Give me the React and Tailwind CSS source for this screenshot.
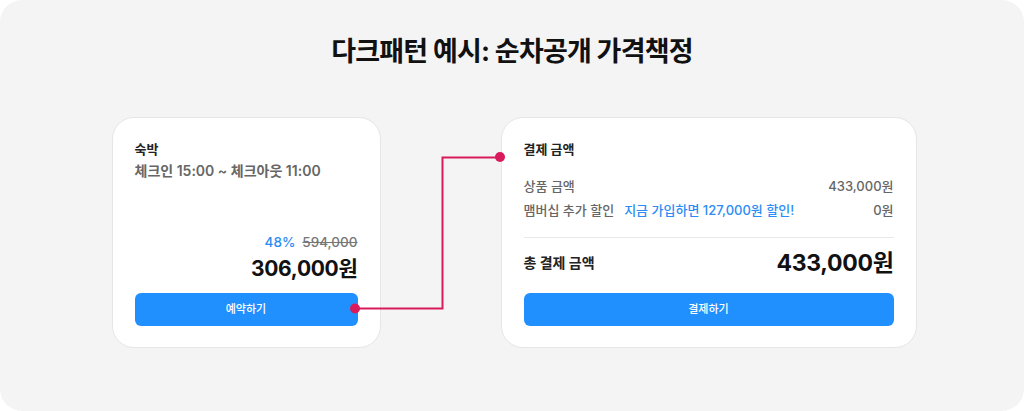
export default function App() {
  return (
    <div className="bg-white w-[1024px] h-[411px] font-['Inter','Noto_Sans_CJK_KR',sans-serif]">
      <div className="relative w-full h-full bg-[#f4f4f4] rounded-[22px] flex flex-col items-center">
        <h1 className="mt-[34px] text-[27px] leading-[36px] font-bold text-[#111] tracking-[-0.8px]">
          다크패턴 예시: 순차공개 가격책정
        </h1>

        <div className="mt-[47px] flex gap-[120px] pl-[4px]">
          {/* 숙박 카드 */}
          <div className="w-[269px] h-[231px] bg-white rounded-[22px] border border-[#e6e6e6] flex flex-col px-[22px] pt-[22px] pb-[21px]">
            <p className="text-[13px] leading-[18px] font-bold text-[#222]">숙박</p>
            <p className="mt-[3px] text-[14px] leading-[20px] font-semibold text-[#666]">
              체크인 15:00 ~ 체크아웃 11:00
            </p>
            <div className="mt-auto flex flex-col items-end">
              <div className="flex items-center gap-[7px] text-[13.5px] leading-[20px] font-medium">
                <span className="text-[#2b8cf5]">48%</span>
                <span className="text-[#777] line-through">594,000</span>
              </div>
              <p className="mt-[3px] text-[21px] leading-[28px] font-bold text-[#111] tracking-[-0.3px]">306,000원</p>
            </div>
            <button className="mt-[10px] h-[33px] w-full rounded-[6px] bg-[#2190ff] text-white text-[11px] font-medium">
              예약하기
            </button>
          </div>

          {/* 결제 카드 */}
          <div className="w-[416px] h-[231px] bg-white rounded-[22px] border border-[#e6e6e6] flex flex-col px-[22px] pt-[22px] pb-[21px]">
            <p className="text-[13px] leading-[18px] font-bold text-[#222]">결제 금액</p>
            <div className="mt-[18px] flex justify-between text-[13px] leading-[20px] font-medium text-[#666]">
              <span>상품 금액</span>
              <span>433,000원</span>
            </div>
            <div className="mt-[4px] flex justify-between text-[13px] leading-[20px] font-medium text-[#666]">
              <span>
                맴버십 추가 할인
                <span className="ml-[10px] text-[#2b8cf5]">지금 가입하면 127,000원 할인!</span>
              </span>
              <span>0원</span>
            </div>
            <div className="mt-[17px] border-t border-[#e8e8e8]"></div>
            <div className="mt-[10px] flex justify-between items-center">
              <span className="text-[14px] leading-[20px] font-bold text-[#222]">총 결제 금액</span>
              <span className="text-[23px] leading-[30px] font-bold text-[#111] tracking-[-0.3px]">433,000원</span>
            </div>
            <button className="mt-[15px] h-[33px] w-full rounded-[6px] bg-[#2190ff] text-white text-[11px] font-medium">
              결제하기
            </button>
          </div>
        </div>

        {/* 연결선 */}
        <svg className="absolute inset-0 pointer-events-none" width="1024" height="411" viewBox="0 0 1024 411">
          <path d="M355 308.5 H442.5 V157.5 H500" fill="none" stroke="#d81b5c" strokeWidth="2" />
          <circle cx="355" cy="308.5" r="5" fill="#d81b5c" />
          <circle cx="500" cy="157" r="5" fill="#d81b5c" />
        </svg>
      </div>
    </div>
  );
}
